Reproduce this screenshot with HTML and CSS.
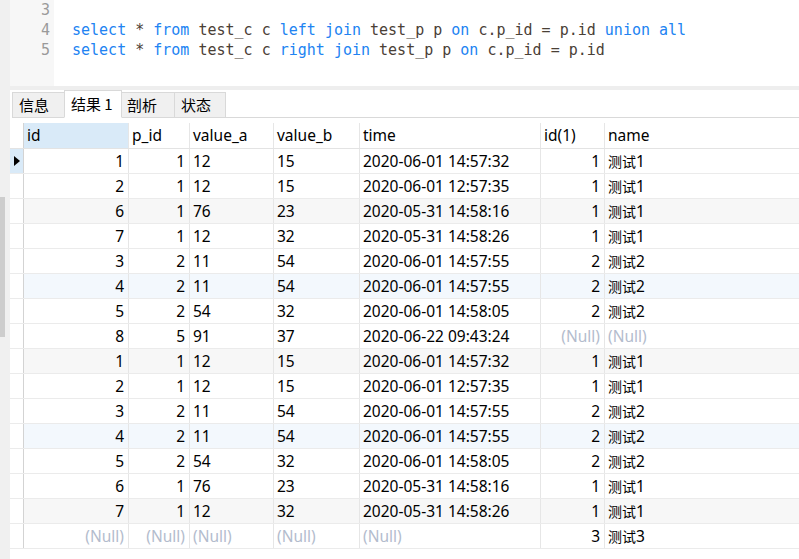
FILE: index.html
```html
<!DOCTYPE html>
<html lang="zh">
<head>
<meta charset="utf-8">
<title>结果</title>
<link rel="stylesheet" href="styles.css">
</head>
<body>
<div class="app">
  <div class="vscroll"><div class="thumb"></div></div>
  <div class="main">
    <div class="editor">
      <div class="gutter">
        <div class="ln">3</div>
        <div class="ln">4</div>
        <div class="ln">5</div>
      </div>
      <div class="code">
        <div class="line">&nbsp;</div>
        <div class="line"><span class="kw">select</span> * <span class="kw">from</span> test_c c <span class="kw">left</span> <span class="kw">join</span> test_p p <span class="kw">on</span> c.p_id = p.id <span class="kw">union</span> <span class="kw">all</span></div>
        <div class="line"><span class="kw">select</span> * <span class="kw">from</span> test_c c <span class="kw">right</span> <span class="kw">join</span> test_p p <span class="kw">on</span> c.p_id = p.id</div>
      </div>
    </div>
    <div class="splitter"></div>
    <div class="tabbar">
      <div class="tab">信息</div>
      <div class="tab active">结果 1</div>
      <div class="tab">剖析</div>
      <div class="tab">状态</div>
      <div class="tabfill"></div>
    </div>
    <div class="grid">
      <div class="row head">
        <div class="c ind"></div>
        <div class="c sel">id</div>
        <div class="c">p_id</div>
        <div class="c">value_a</div>
        <div class="c">value_b</div>
        <div class="c">time</div>
        <div class="c">id(1)</div>
        <div class="c">name</div>
      </div>
      <div class="row">
        <div class="c ind cur"><span class="tri"></span></div>
        <div class="c r">1</div><div class="c r">1</div><div class="c">12</div><div class="c">15</div><div class="c">2020-06-01 14:57:32</div><div class="c r">1</div><div class="c"><span class="cjk">测试</span>1</div>
      </div>
      <div class="row">
        <div class="c ind"></div>
        <div class="c r">2</div><div class="c r">1</div><div class="c">12</div><div class="c">15</div><div class="c">2020-06-01 12:57:35</div><div class="c r">1</div><div class="c"><span class="cjk">测试</span>1</div>
      </div>
      <div class="row gray">
        <div class="c ind"></div>
        <div class="c r">6</div><div class="c r">1</div><div class="c">76</div><div class="c">23</div><div class="c">2020-05-31 14:58:16</div><div class="c r">1</div><div class="c"><span class="cjk">测试</span>1</div>
      </div>
      <div class="row">
        <div class="c ind"></div>
        <div class="c r">7</div><div class="c r">1</div><div class="c">12</div><div class="c">32</div><div class="c">2020-05-31 14:58:26</div><div class="c r">1</div><div class="c"><span class="cjk">测试</span>1</div>
      </div>
      <div class="row">
        <div class="c ind"></div>
        <div class="c r">3</div><div class="c r">2</div><div class="c">11</div><div class="c">54</div><div class="c">2020-06-01 14:57:55</div><div class="c r">2</div><div class="c"><span class="cjk">测试</span>2</div>
      </div>
      <div class="row blue">
        <div class="c ind"></div>
        <div class="c r">4</div><div class="c r">2</div><div class="c">11</div><div class="c">54</div><div class="c">2020-06-01 14:57:55</div><div class="c r">2</div><div class="c"><span class="cjk">测试</span>2</div>
      </div>
      <div class="row">
        <div class="c ind"></div>
        <div class="c r">5</div><div class="c r">2</div><div class="c">54</div><div class="c">32</div><div class="c">2020-06-01 14:58:05</div><div class="c r">2</div><div class="c"><span class="cjk">测试</span>2</div>
      </div>
      <div class="row">
        <div class="c ind"></div>
        <div class="c r">8</div><div class="c r">5</div><div class="c">91</div><div class="c">37</div><div class="c">2020-06-22 09:43:24</div><div class="c r null">(Null)</div><div class="c null">(Null)</div>
      </div>
      <div class="row gray">
        <div class="c ind"></div>
        <div class="c r">1</div><div class="c r">1</div><div class="c">12</div><div class="c">15</div><div class="c">2020-06-01 14:57:32</div><div class="c r">1</div><div class="c"><span class="cjk">测试</span>1</div>
      </div>
      <div class="row">
        <div class="c ind"></div>
        <div class="c r">2</div><div class="c r">1</div><div class="c">12</div><div class="c">15</div><div class="c">2020-06-01 12:57:35</div><div class="c r">1</div><div class="c"><span class="cjk">测试</span>1</div>
      </div>
      <div class="row">
        <div class="c ind"></div>
        <div class="c r">3</div><div class="c r">2</div><div class="c">11</div><div class="c">54</div><div class="c">2020-06-01 14:57:55</div><div class="c r">2</div><div class="c"><span class="cjk">测试</span>2</div>
      </div>
      <div class="row blue">
        <div class="c ind"></div>
        <div class="c r">4</div><div class="c r">2</div><div class="c">11</div><div class="c">54</div><div class="c">2020-06-01 14:57:55</div><div class="c r">2</div><div class="c"><span class="cjk">测试</span>2</div>
      </div>
      <div class="row">
        <div class="c ind"></div>
        <div class="c r">5</div><div class="c r">2</div><div class="c">54</div><div class="c">32</div><div class="c">2020-06-01 14:58:05</div><div class="c r">2</div><div class="c"><span class="cjk">测试</span>2</div>
      </div>
      <div class="row">
        <div class="c ind"></div>
        <div class="c r">6</div><div class="c r">1</div><div class="c">76</div><div class="c">23</div><div class="c">2020-05-31 14:58:16</div><div class="c r">1</div><div class="c"><span class="cjk">测试</span>1</div>
      </div>
      <div class="row gray">
        <div class="c ind"></div>
        <div class="c r">7</div><div class="c r">1</div><div class="c">12</div><div class="c">32</div><div class="c">2020-05-31 14:58:26</div><div class="c r">1</div><div class="c"><span class="cjk">测试</span>1</div>
      </div>
      <div class="row">
        <div class="c ind"></div>
        <div class="c r null">(Null)</div><div class="c r null">(Null)</div><div class="c null">(Null)</div><div class="c null">(Null)</div><div class="c null">(Null)</div><div class="c r">3</div><div class="c"><span class="cjk">测试</span>3</div>
      </div>
    </div>
  </div>
</div>
</body>
</html>
```

FILE: styles.css
```css
html, body {
  margin: 0;
  padding: 0;
  background: #ffffff;
}
.app {
  display: flex;
  width: 799px;
  height: 559px;
  overflow: hidden;
}
.vscroll {
  width: 10px;
  flex: 0 0 10px;
  background: #f0f0f0;
  padding-top: 197px;
  box-sizing: border-box;
}
.thumb {
  width: 5px;
  height: 140px;
  background: #cdcdcd;
}
.main {
  flex: 1;
  display: flex;
  flex-direction: column;
  min-width: 0;
}
.main > * {
  flex-shrink: 0;
}
.editor {
  height: 86px;
  display: flex;
  font-family: "DejaVu Sans Mono", "Liberation Mono", monospace;
  font-size: 15px;
  line-height: 20px;
}
.gutter {
  width: 44px;
  background: #f7f7f7;
  text-align: right;
  padding-right: 4px;
  box-sizing: border-box;
  color: #9a9a9a;
}
.code {
  padding-left: 18px;
  color: #4a4036;
}
.line {
  white-space: pre;
  height: 20px;
}
.kw {
  color: #2183f2;
}
.splitter {
  height: 4px;
  background: #eeeeee;
}
.tabbar {
  height: 28px;
  display: flex;
  align-items: flex-end;
  padding-left: 2px;
  font-family: "Noto Sans CJK SC", "Noto Sans", sans-serif;
  font-size: 15px;
  color: #000;
}
.tab {
  width: 52px;
  height: 26px;
  box-sizing: border-box;
  background: #f0f0f0;
  border: 1px solid #d9d9d9;
  border-right: none;
  padding-left: 6px;
  line-height: 24px;
}
.tab.active {
  width: 58px;
  height: 28px;
  background: #ffffff;
  border-bottom: 1px solid #ffffff;
  border-right: 1px solid #d9d9d9;
  line-height: 26px;
}
.tab.active + .tab {
  border-left: none;
  padding-left: 5px;
}
.tab:nth-child(4) {
  border-right: 1px solid #d9d9d9;
}
.tabfill {
  flex: 1;
  height: 1px;
  background: #d9d9d9;
}
.grid {
  margin-top: 5px;
  font-family: "Noto Sans", "Noto Sans CJK SC", sans-serif;
  font-size: 15.5px;
  color: #000;
}
.row {
  display: grid;
  grid-template-columns: 14px 105px 61px 84px 86px 181px 64px 1fr;
  height: 25px;
  box-sizing: border-box;
  border-bottom: 1px solid #ebebeb;
}
.row.head {
  height: 26px;
  border-bottom: 1px solid #e3e3e3;
}
.c {
  box-sizing: border-box;
  border-right: 1px solid #e6e6e6;
  padding: 0 3px;
  line-height: 24px;
  white-space: nowrap;
  overflow: hidden;
}
.c:last-child {
  border-right: none;
}
.r {
  text-align: right;
  padding-right: 4px;
}
.ind {
  border-right: 1px solid #d3d3d3;
  background: #ffffff;
  padding: 0;
  display: flex;
  align-items: center;
  justify-content: center;
}
.ind.cur {
  background: #d9eaf8;
}
.tri {
  width: 0;
  height: 0;
  border-top: 5px solid transparent;
  border-bottom: 5px solid transparent;
  border-left: 6px solid #000;
  margin-left: 1px;
}
.sel {
  background: #d9eaf8;
}
.gray .c:not(.ind) {
  background: #f7f7f7;
}
.blue .c:not(.ind) {
  background: #f3f8fd;
}
.null {
  color: #b3bccd;
}
.cjk {
  font-family: "Noto Sans CJK SC", sans-serif;
  font-size: 14px;
}
```
